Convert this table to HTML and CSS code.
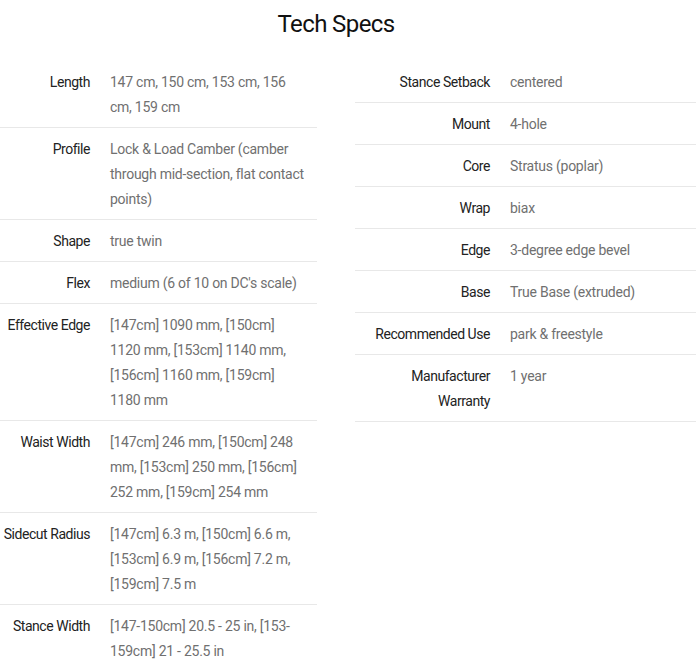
FILE: index.html
```html
<!DOCTYPE html>
<html>
<head>
<meta charset="utf-8">
<link rel="stylesheet" href="styles.css">
</head>
<body>
<section class="tech-specs">
  <h1 class="title">Tech Specs</h1>
  <div class="columns">
    <dl class="spec-list spec-left">
      <div class="row"><dt>Length</dt><dd>147 cm, 150 cm, 153 cm, 156 cm, 159 cm</dd></div>
      <div class="row"><dt>Profile</dt><dd>Lock &amp; Load Camber (camber through mid-section, flat contact points)</dd></div>
      <div class="row"><dt>Shape</dt><dd>true twin</dd></div>
      <div class="row"><dt>Flex</dt><dd>medium (6 of 10 on DC's scale)</dd></div>
      <div class="row"><dt>Effective Edge</dt><dd>[147cm] 1090 mm, [150cm] 1120&nbsp;mm, [153cm] 1140 mm, [156cm] 1160 mm, [159cm] 1180&nbsp;mm</dd></div>
      <div class="row"><dt>Waist Width</dt><dd>[147cm] 246 mm, [150cm] 248 mm, [153cm] 250 mm, [156cm] 252 mm, [159cm] 254 mm</dd></div>
      <div class="row"><dt>Sidecut Radius</dt><dd>[147cm] 6.3 m, [150cm] 6.6 m, [153cm] 6.9 m, [156cm] 7.2 m, [159cm] 7.5 m</dd></div>
      <div class="row"><dt>Stance Width</dt><dd>[147-150cm] 20.5 - 25 in, [153-159cm] 21 - 25.5 in</dd></div>
    </dl>
    <dl class="spec-list spec-right">
      <div class="row"><dt>Stance Setback</dt><dd>centered</dd></div>
      <div class="row"><dt>Mount</dt><dd>4-hole</dd></div>
      <div class="row"><dt>Core</dt><dd>Stratus (poplar)</dd></div>
      <div class="row"><dt>Wrap</dt><dd>biax</dd></div>
      <div class="row"><dt>Edge</dt><dd>3-degree edge bevel</dd></div>
      <div class="row"><dt>Base</dt><dd>True Base (extruded)</dd></div>
      <div class="row"><dt>Recommended Use</dt><dd>park &amp; freestyle</dd></div>
      <div class="row"><dt>Manufacturer Warranty</dt><dd>1 year</dd></div>
    </dl>
  </div>
</section>
</body>
</html>
```

FILE: styles.css
```css
html, body {
  margin: 0;
  padding: 0;
  background: #ffffff;
}

body {
  font-family: Roboto, "Liberation Sans", sans-serif;
  color: #222222;
  width: 696px;
  overflow: hidden;
}

.title {
  margin: 0 0 21px 0;
  padding: 9px 24px 0 0;
  font-size: 24px;
  line-height: 31px;
  font-weight: 400;
  text-align: center;
  color: #111111;
  letter-spacing: -0.6px;
}

.columns {
  display: grid;
  grid-template-columns: 317px 341px;
  column-gap: 38px;
  align-items: start;
}

.spec-list {
  margin: 0;
  padding: 0;
}

.row {
  display: grid;
  column-gap: 20px;
  padding: 9px 0 7px 0;
  border-bottom: 1px solid #e8e8e8;
  font-size: 14px;
  line-height: 25px;
}

.spec-left .row {
  grid-template-columns: 90px 1fr;
}

.spec-right .row {
  grid-template-columns: 135px 1fr;
}

.spec-right .row dt {
  padding-left: 15px;
}

.row dt {
  margin: 0;
  text-align: right;
  color: #222222;
  letter-spacing: -0.45px;
}

.row dd {
  margin: 0;
  padding-right: 8px;
  color: #707070;
  letter-spacing: -0.25px;
}
```
